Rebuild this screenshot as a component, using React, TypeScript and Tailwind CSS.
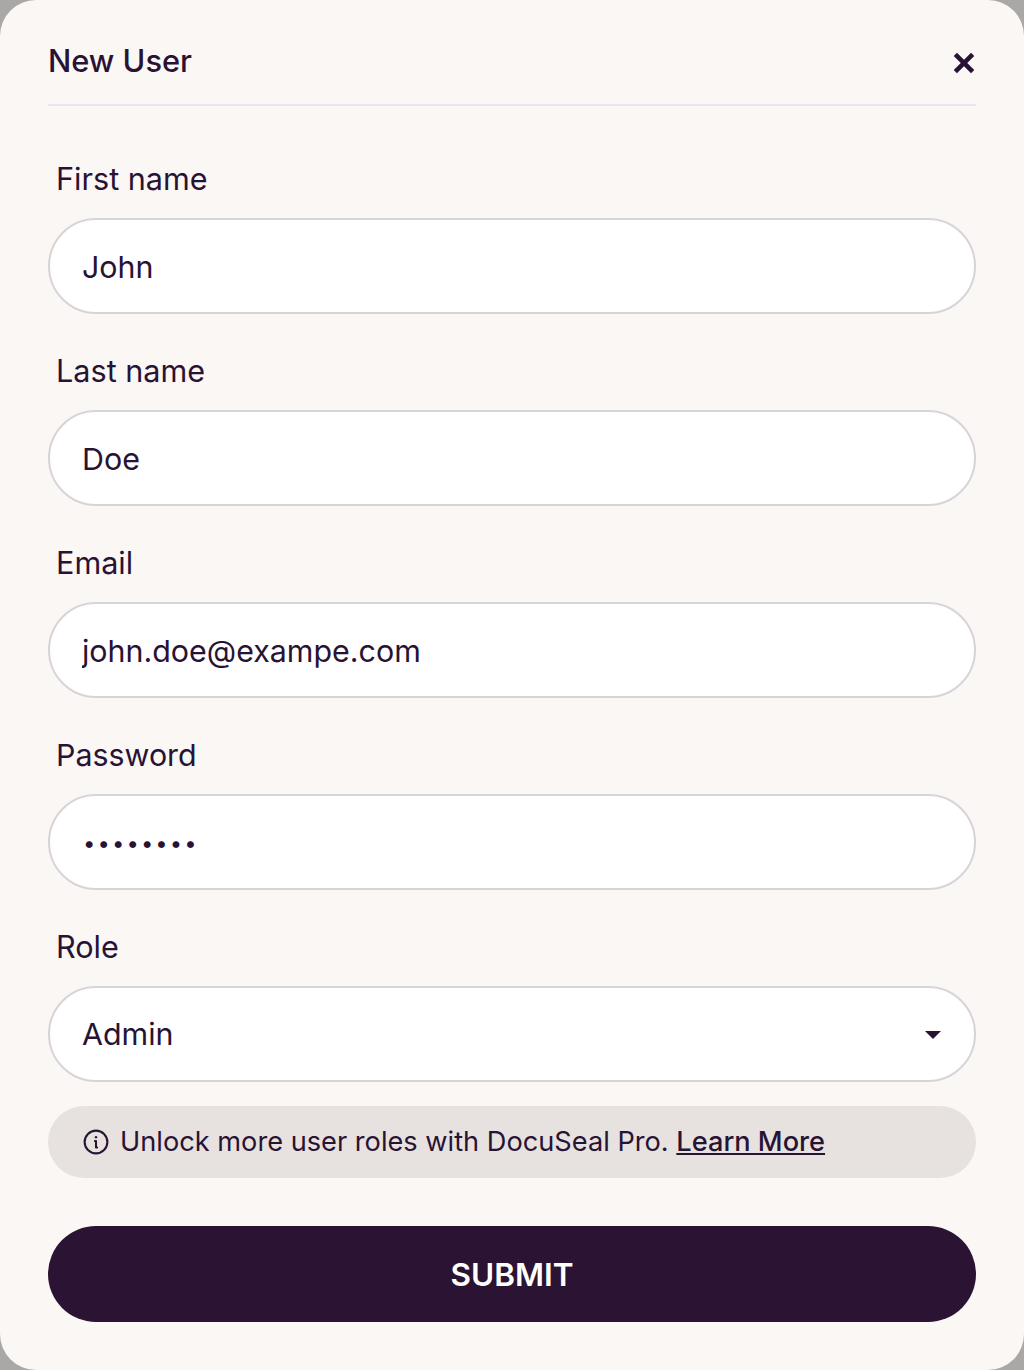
import React from "react";

function Field({ label, value }: { label: string; value: string }) {
  return (
    <div className="flex flex-col">
      <label className="h-[72px] pl-2 pt-[15px] text-[30.6px] leading-[36px] text-[#291334]">{label}</label>
      <input
        readOnly
        type="text"
        value={value}
        className="h-[96px] w-full rounded-full border-2 border-[#d8d4d5] bg-white px-8 pt-[1px] text-[30.4px] text-[#291334] outline-none"
      />
    </div>
  );
}

export default function App() {
  return (
    <div className="h-[1370px] w-[1024px] bg-[#a9a8a6] font-['Inter',sans-serif] text-[#291334]">
      <div className="flex h-full flex-col rounded-[36px] bg-[#faf7f5] px-12">
        <div className="flex h-[106px] items-center justify-between border-b-2 border-[#e9e5ee] pt-4">
          <h1 className="mt-[1px] text-[30.8px] leading-[40px] font-medium">New User</h1>
          <svg width="32" height="32" viewBox="0 0 24 24" className="mr-[-4px] mt-[6px]" fill="none" stroke="#291334" strokeWidth="3.4" strokeLinecap="butt">
            <path d="M5.5 5.5 18.5 18.5M18.5 5.5 5.5 18.5" />
          </svg>
        </div>
        <div className="mt-10 flex flex-col gap-6">
          <Field label="First name" value="John" />
          <Field label="Last name" value="Doe" />
          <Field label="Email" value="john.doe@exampe.com" />
          <div className="flex flex-col">
            <label className="h-[72px] pl-2 pt-[15px] text-[30.4px] leading-[36px]">Password</label>
            <input
              readOnly
              type="password"
              value="password"
              className="h-[96px] w-full rounded-full border-2 border-[#d8d4d5] bg-white pl-[33px] pr-8 pt-[2px] text-[22px] tracking-[2.1px] text-[#291334] outline-none"
            />
          </div>
          <div className="flex flex-col">
            <label className="h-[72px] pl-2 pt-[15px] text-[30.6px] leading-[36px]">Role</label>
            <div className="flex h-[96px] items-center justify-between rounded-full border-2 border-[#d8d4d5] bg-white pl-8 pr-[33px]">
              <span className="mt-[2px] text-[30.4px]">Admin</span>
              <svg width="16" height="10" viewBox="0 0 16 10" className="mt-0.5">
                <path d="M0 1H16L8 9Z" fill="#291334" />
              </svg>
            </div>
          </div>
        </div>
        <div className="mt-6 flex h-[72px] items-center gap-[11px] rounded-full bg-[#e7e2df] px-[35px] text-[27.2px]">
          <svg width="26" height="26" viewBox="0 0 24 24" fill="none" stroke="#291334" strokeWidth="1.9" strokeLinecap="round" strokeLinejoin="round">
            <circle cx="12" cy="12" r="10.5" />
            <path d="M11 11h1v6h1" />
            <path d="M12 7.5h.01" strokeWidth="2.2" />
          </svg>
          <span className="mt-[1px]">
            Unlock more user roles with DocuSeal Pro. <a className="font-medium underline">Learn More</a>
          </span>
        </div>
        <button className="mt-12 h-[96px] w-full rounded-full bg-[#2b1433] pt-[2px] text-[31.5px] font-semibold text-white">SUBMIT</button>
      </div>
    </div>
  );
}
